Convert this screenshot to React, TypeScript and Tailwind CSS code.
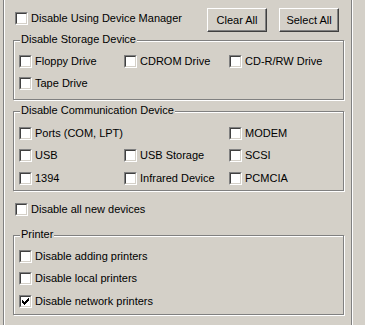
import React from "react";

function Box({ checked = false }: { checked?: boolean }) {
  return (
    <span className="relative block w-[13px] h-[13px] shrink-0 bg-white border border-t-[#808080] border-l-[#808080] border-r-white border-b-white">
      <span className="absolute inset-0 border border-t-[#404040] border-l-[#404040] border-r-[#d4d0c8] border-b-[#d4d0c8]" />
      {checked && (
        <svg
          className="absolute left-[2px] top-[2px]"
          width="7"
          height="7"
          viewBox="0 0 7 7"
          shapeRendering="crispEdges"
        >
          <path
            d="M0 2h1v3H0z M1 3h1v3H1z M2 4h1v3H2z M3 3h1v3H3z M4 2h1v3H4z M5 1h1v3H5z M6 0h1v3H6z"
            fill="#000"
          />
        </svg>
      )}
    </span>
  );
}

function Check({ label, checked = false }: { label: string; checked?: boolean }) {
  return (
    <div className="flex items-center h-[13px]">
      <Box checked={checked} />
      <span className="ml-[3px] text-[11px] leading-[13px] text-black whitespace-nowrap">
        {label}
      </span>
    </div>
  );
}

function Group({
  title,
  children,
  className,
}: {
  title: string;
  children: React.ReactNode;
  className: string;
}) {
  return (
    <div
      className={
        "relative border border-[#808080] shadow-[1px_1px_0_#fff,inset_1px_1px_0_#fff] " +
        className
      }
    >
      <span className="absolute left-[6px] top-[-8px] px-[1px] bg-[#d4d0c8] text-[11px] leading-[13px] text-black whitespace-nowrap">
        {title}
      </span>
      {children}
    </div>
  );
}

function Btn({ label }: { label: string }) {
  return (
    <button className="w-[60px] h-[24px] bg-[#d4d0c8] border border-t-white border-l-white border-r-[#404040] border-b-[#404040] shadow-[inset_-1px_-1px_0_#808080] text-[11px] leading-[13px] text-black">
      {label}
    </button>
  );
}

function Row({ children, className = "" }: { children: React.ReactNode; className?: string }) {
  return <div className={"flex " + className}>{children}</div>;
}

function Cell({ children }: { children?: React.ReactNode }) {
  return <div className="w-[105px] shrink-0">{children}</div>;
}

export default function App() {
  return (
    <div className="w-[365px] h-[325px] overflow-hidden bg-[#d4d0c8] font-['Liberation_Sans',Arial,sans-serif]">
      <div className="ml-[3px] w-[350px] h-[325px] border-l border-l-[#808080] border-r border-r-white shadow-[inset_1px_0_0_#fff,inset_-1px_0_0_#808080] pl-[9px]">
        <div className="w-[331px] flex flex-col">
          <div className="mt-[8px] h-[24px] flex items-start pl-[2px] pr-[5px]">
            <div className="mt-[4px]">
              <Check label="Disable Using Device Manager" />
            </div>
            <div className="ml-auto flex gap-[12px]">
              <Btn label="Clear All" />
              <Btn label="Select All" />
            </div>
          </div>

          <Group title="Disable Storage Device" className="mt-[8px] h-[60px] pl-[5px] pt-[14px]">
            <Row>
              <Cell>
                <Check label="Floppy Drive" />
              </Cell>
              <Cell>
                <Check label="CDROM Drive" />
              </Cell>
              <Cell>
                <Check label="CD-R/RW Drive" />
              </Cell>
            </Row>
            <Row className="mt-[9px]">
              <Cell>
                <Check label="Tape Drive" />
              </Cell>
            </Row>
          </Group>

          <Group title="Disable Communication Device" className="mt-[11px] h-[80px] pl-[5px] pt-[15px]">
            <Row>
              <Cell>
                <Check label="Ports (COM, LPT)" />
              </Cell>
              <Cell />
              <Cell>
                <Check label="MODEM" />
              </Cell>
            </Row>
            <Row className="mt-[9px]">
              <Cell>
                <Check label="USB" />
              </Cell>
              <Cell>
                <Check label="USB Storage" />
              </Cell>
              <Cell>
                <Check label="SCSI" />
              </Cell>
            </Row>
            <Row className="mt-[10px]">
              <Cell>
                <Check label="1394" />
              </Cell>
              <Cell>
                <Check label="Infrared Device" />
              </Cell>
              <Cell>
                <Check label="PCMCIA" />
              </Cell>
            </Row>
          </Group>

          <div className="mt-[12px] pl-[2px]">
            <Check label="Disable all new devices" />
          </div>

          <Group title="Printer" className="mt-[19px] h-[80px] pl-[5px] pt-[14px]">
            <Check label="Disable adding printers" />
            <div className="mt-[9px]">
              <Check label="Disable local printers" />
            </div>
            <div className="mt-[10px]">
              <Check label="Disable network printers" checked />
            </div>
          </Group>
        </div>
      </div>
    </div>
  );
}
